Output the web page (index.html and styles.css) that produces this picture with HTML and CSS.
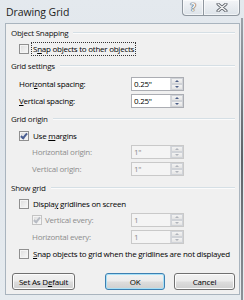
FILE: index.html
```html
<!DOCTYPE html>
<html>
<head>
<meta charset="utf-8">
<link rel="stylesheet" href="styles.css">
</head>
<body>
<div class="window">
  <div class="titlebar">
    <span class="title">Drawing Grid</span>
    <div class="caption-btns">
      <div class="cbtn help"><span>?</span></div>
      <div class="cbtn close">
        <svg width="12" height="9" viewBox="0 0 12 9"><path d="M2 1 L10 8 M10 1 L2 8" stroke="#5a6068" stroke-width="3" stroke-linecap="round"/><path d="M2 1 L10 8 M10 1 L2 8" stroke="#f4f4f4" stroke-width="1.4" stroke-linecap="round"/></svg>
      </div>
    </div>
  </div>
  <div class="client">
    <div class="head first"><span>Object Snapping</span><i class="line"></i></div>
    <div class="row m3"><span class="cb"></span><span class="label focus">S<u>n</u>ap objects to other objects</span></div>

    <div class="head m4"><span>Grid settings</span><i class="line"></i></div>
    <div class="row m5"><span class="flabel">Hori<u>z</u>ontal spacing:</span><span class="spin"><span class="val">0.25"</span><span class="arrows"><b class="up"></b><b class="down"></b></span></span></div>
    <div class="row m3"><span class="flabel"><u>V</u>ertical spacing:</span><span class="spin"><span class="val">0.25"</span><span class="arrows"><b class="up"></b><b class="down"></b></span></span></div>

    <div class="head m5"><span>Grid origin</span><i class="line"></i></div>
    <div class="row m4"><span class="cb checked"></span><span class="label">Use <u>m</u>argins</span></div>
    <div class="row m2 off"><span class="flabel ind">Horizontal origin:</span><span class="spin"><span class="val">1"</span><span class="arrows"><b class="up"></b><b class="down"></b></span></span></div>
    <div class="row m3 off"><span class="flabel ind">Vertical origin:</span><span class="spin"><span class="val">1"</span><span class="arrows"><b class="up"></b><b class="down"></b></span></span></div>

    <div class="head m6"><span>Show grid</span><i class="line"></i></div>
    <div class="row m3"><span class="cb"></span><span class="label">Displa<u>y</u> gridlines on screen</span></div>
    <div class="row m2 off"><span class="cb checked sub"></span><span class="flabel">Vertical every:</span><span class="spin"><span class="val">1</span><span class="arrows"><b class="up"></b><b class="down"></b></span></span></div>
    <div class="row m3 off"><span class="flabel ind">Horizontal every:</span><span class="spin"><span class="val">1</span><span class="arrows"><b class="up"></b><b class="down"></b></span></span></div>
    <div class="row m3"><span class="cb"></span><span class="label"><u>S</u>nap objects to grid when the gridlines are not displayed</span></div>

    <div class="buttons">
      <button class="btn def">Set As D<u>e</u>fault</button>
      <button class="btn ok">OK</button>
      <button class="btn cancel">Cancel</button>
    </div>
  </div>
</div>
</body>
</html>
```

FILE: styles.css
```css
html, body {
  margin: 0;
  padding: 0;
}
body {
  width: 244px;
  height: 300px;
  overflow: hidden;
  font-family: "Open Sans", "Noto Sans", sans-serif;
  font-size: 8px;
  letter-spacing: -0.25px;
  color: #000;
}
.window {
  width: 244px;
  height: 300px;
  background: linear-gradient(180deg, #e4e9ee 0%, #dfe5eb 40%, #e6ebef 100%);
  position: relative;
  overflow: hidden;
}
.window::after {
  content: "";
  position: absolute;
  right: 1px;
  top: 18px;
  bottom: 0;
  width: 2px;
  background: linear-gradient(180deg, #9aa1a8, #5c6166 50%, #8c9298);
}
.titlebar {
  height: 23px;
  display: flex;
  justify-content: space-between;
  align-items: flex-start;
}
.title {
  margin: 6px 0 0 6px;
  font-size: 10.5px;
  color: #1c1c1c;
  line-height: 12px;
  letter-spacing: -0.1px;
}
.caption-btns {
  display: flex;
  margin-right: 4px;
}
.cbtn {
  height: 15px;
  border: 1px solid #8f979f;
  border-top: none;
  background: linear-gradient(180deg, rgba(255,255,255,0.55), rgba(214,221,228,0.5));
  display: flex;
  align-items: center;
  justify-content: center;
  box-shadow: inset 0 0 0 1px rgba(255,255,255,0.6);
}
.help {
  width: 20px;
  border-radius: 0 0 0 4px;
  border-right: none;
}
.help span {
  font-family: "DejaVu Sans", sans-serif;
  font-weight: bold;
  font-size: 10px;
  color: #f6f6f6;
  text-shadow: 0 0 1px #4a5058, 0 0 1px #4a5058, 0 0 1px #4a5058;
  line-height: 10px;
}
.close {
  width: 35px;
  border-radius: 0 0 4px 0;
}
.client {
  margin-left: 5px;
  height: 270px;
  border: 1px solid #a9b4be;
  background: #f0f0f0;
  padding: 0 4px 0 5px;
  box-sizing: content-box;
  display: flex;
  flex-direction: column;
  width: 224px;
}
.head {
  height: 12px;
  display: flex;
  align-items: center;
  line-height: 12px;
  color: #111;
}
.head.first { margin-top: 3px; }
.line {
  flex: 1;
  height: 1px;
  background: #d5dfe5;
  margin-left: 5px;
  border-bottom: 1px solid #fbfbfb;
}
.row {
  height: 14px;
  display: flex;
  align-items: center;
  line-height: 12px;
}
.m2 { margin-top: 2px; }
.m3 { margin-top: 3px; }
.m4 { margin-top: 4px; }
.m5 { margin-top: 5px; }
.m6 { margin-top: 6px; }
.cb {
  width: 8px;
  height: 8px;
  margin-left: 8px;
  margin-right: 3px;
  border: 1px solid #8f8f8f;
  background: linear-gradient(135deg, #dcdcdc, #f9f9f9);
  box-shadow: inset 0 0 0 1px #f4f4f4;
  position: relative;
  flex: none;
}
.cb.checked::after {
  content: "";
  position: absolute;
  left: 2px;
  top: 0px;
  width: 2px;
  height: 5px;
  border: solid #4a5e92;
  border-width: 0 2px 2px 0;
  transform: rotate(40deg);
}
.cb.sub { margin-left: 21px; }
.off .cb { border-color: #c4c4c4; }
.off .cb.checked::after { border-color: #b8bcc4; }
.label { white-space: nowrap; padding: 0 1px; }
.focus {
  outline: 1px dotted #333;
  outline-offset: 0px;
}
.flabel {
  flex: 1;
  padding-left: 8px;
  white-space: nowrap;
}
.cb.sub + .flabel { padding-left: 0; }
.flabel.ind { padding-left: 21px; }
.off .flabel { color: #8d8d8d; }
.spin {
  width: 51px;
  height: 12px;
  margin-right: 51px;
  border: 1px solid #abadb3;
  background: #fff;
  display: flex;
  flex: none;
}
.off .spin { background: #f4f4f4; border-color: #c9c9c9; }
.val {
  flex: 1;
  padding-left: 2px;
  line-height: 12px;
}
.off .val { color: #8d8d8d; }
.arrows {
  width: 12px;
  display: flex;
  flex-direction: column;
  border-left: 1px solid #d6d8dc;
}
.arrows b {
  flex: 1;
  position: relative;
  background: linear-gradient(180deg, #f3f3f3, #e4e4e4);
  border: 1px solid #d0d3d8;
}
.arrows b::after {
  content: "";
  position: absolute;
  left: 3px;
  border-left: 2.5px solid transparent;
  border-right: 2.5px solid transparent;
}
.arrows .up::after { top: 1px; border-bottom: 2px solid #4c5f87; }
.arrows .down::after { top: 1px; border-top: 2px solid #4c5f87; }
.off .arrows .up::after { border-bottom-color: #b0b4bb; }
.off .arrows .down::after { border-top-color: #b0b4bb; }
.buttons {
  margin-top: 12px;
  display: flex;
  height: 17px;
}
.btn {
  height: 17px;
  padding: 0;
  font-family: inherit;
  font-size: 8px;
  letter-spacing: -0.2px;
  color: #000;
  border: 1px solid #707070;
  border-radius: 3px;
  background: linear-gradient(180deg, #f2f2f2 0%, #ebebeb 48%, #dddddd 52%, #cfcfcf 100%);
  box-shadow: inset 0 0 0 1px #fcfcfc;
  line-height: 14px;
}
.def { width: 63px; margin-left: 1px; }
.ok {
  width: 60px;
  margin-left: auto;
  border-color: #3c7fb1;
  box-shadow: inset 0 0 0 1px #a7e0f7;
}
.cancel { width: 61px; margin-left: 9px; }
```
